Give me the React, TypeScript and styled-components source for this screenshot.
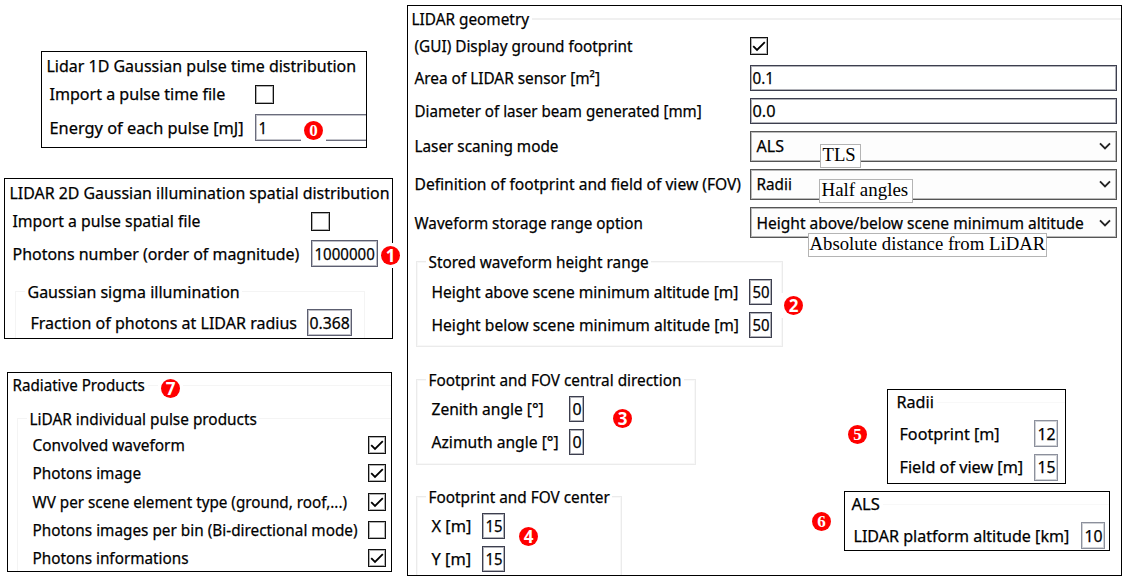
import React, { useLayoutEffect, useRef, useState } from "react";
import styled, { createGlobalStyle } from "styled-components";

const GlobalStyle = createGlobalStyle`
  *, *::before, *::after { box-sizing: border-box; }
  body { margin: 0; background: #fff; overflow: hidden; }
`;

const Page = styled.main`
  position: relative;
  display: grid;
  grid-template-columns: 407px 715px;
  width: 1125px;
  height: 578px;
  overflow: hidden;
  background: #fff;
  color: #000;
  font-family: "Noto Sans", "Open Sans", sans-serif;
  font-size: 16.5px;
  line-height: 22px;
`;

const LeftColumn = styled.div`
  display: flex;
  flex-direction: column;
  align-items: flex-start;
`;

const Panel = styled.section<{ $w: number; $h: number; $left?: number; $top?: number }>`
  display: flex;
  flex-direction: column;
  flex: none;
  width: ${(p) => p.$w}px;
  height: ${(p) => p.$h}px;
  margin-left: ${(p) => p.$left ?? 0}px;
  margin-top: ${(p) => p.$top ?? 0}px;
  border: 1px solid #000;
  overflow: hidden;
`;

const Legend = styled.div<{ $x: number; $top: number; $line?: string }>`
  display: flex;
  align-items: center;
  flex: none;
  height: 22px;
  margin-top: ${(p) => p.$top}px;
  padding-left: ${(p) => p.$x}px;
  &::after {
    content: "";
    flex: 1;
    height: ${(p) => (p.$line === "#f0f0f0" ? 2 : 1)}px;
    margin-left: 3px;
    background: ${(p) => p.$line ?? "transparent"};
  }
`;

const Row = styled.div<{ $h: number; $x: number; $top?: number }>`
  display: flex;
  align-items: center;
  flex: none;
  height: ${(p) => p.$h}px;
  margin-top: ${(p) => p.$top ?? 0}px;
  padding-left: ${(p) => p.$x}px;
`;

const LabelCell = styled.div<{ $w: number }>`
  flex: none;
  width: ${(p) => p.$w}px;
`;

const Group = styled.div<{ $w: number; $h: number; $top: number; $left: number; $faint?: boolean; $open?: boolean }>`
  flex: none;
  width: ${(p) => p.$w}px;
  height: ${(p) => p.$h}px;
  margin-top: ${(p) => p.$top}px;
  margin-left: ${(p) => p.$left}px;
  border: 1px solid ${(p) => (p.$faint ? "#f4f4f4" : "#ebebeb")};
  box-shadow: ${(p) => (p.$faint ? "none" : "inset 0 0 0 1px #f8f8f8")};
  ${(p) => p.$open && "border-bottom: 0;"}
`;

const GroupTitle = styled.div`
  width: fit-content;
  height: 22px;
  margin-top: -11px;
  margin-left: 9px;
  padding: 0 2px;
  background: #fff;
`;

const Field = styled.div<{ $w: number; $h?: number; $tone?: string; $pad?: number }>`
  display: flex;
  align-items: center;
  flex: none;
  width: ${(p) => p.$w}px;
  height: ${(p) => p.$h ?? 27}px;
  padding-left: ${(p) => p.$pad ?? 2}px;
  border: 1px solid ${(p) => p.$tone ?? "#3c3e4e"};
  box-shadow: inset 0 0 0 1px ${(p) => p.$tone ?? "#3c3e4e"}66;
  background: #fff;
`;

const Select = styled(Field)`
  height: 31px;
  padding-left: 5px;
  padding-right: 5px;
  justify-content: space-between;
  background: #fdfdfd;
`;

const Box = styled.div<{ $size: number }>`
  flex: none;
  width: ${(p) => p.$size}px;
  height: ${(p) => p.$size}px;
  border: 1px solid #111;
  box-shadow: inset 0 0 0 1px #5557;
  svg { display: block; width: 100%; height: 100%; }
`;

const Lower = styled.div`
  display: flex;
`;

const GroupColumn = styled.div`
  width: 436px;
  flex: none;
`;

const SideColumn = styled.div`
  display: flex;
  flex-direction: column;
`;

const Badge = styled.div<{ $cx: number; $cy: number; $serif?: boolean }>`
  position: absolute;
  left: ${(p) => p.$cx - 12.5}px;
  top: ${(p) => p.$cy - 12.5}px;
  display: grid;
  place-items: center;
  width: 25px;
  height: 25px;
  background: #fff;
  span {
    width: 19px;
    height: 19px;
    border-radius: 50%;
    background: #f00;
    color: #fff;
    text-align: center;
    font: bold 17px/19px ${(p) => (p.$serif ? '"Liberation Serif", serif' : '"Noto Sans", sans-serif')};
  }
`;

const Note = styled.div<{ $x: number; $y: number; $w: number; $pad: number }>`
  position: absolute;
  left: ${(p) => p.$x}px;
  top: ${(p) => p.$y}px;
  width: ${(p) => p.$w}px;
  height: 24px;
  padding-left: ${(p) => p.$pad}px;
  border: 1px solid #b4b4b4;
  background: #fff;
  font-family: "Liberation Serif", serif;
  font-size: 18px;
  line-height: 21px;
  span { -webkit-text-stroke-width: 0; }
`;

const Outer = styled.span<{ $w: number }>`
  display: block;
  flex: none;
  width: ${(p) => p.$w}px;
  white-space: nowrap;
`;

const Inner = styled.span`
  display: inline-block;
  transform-origin: 0 50%;
  -webkit-text-stroke: 0.25px currentColor;
`;

/* Condenses a caption horizontally so that it fills the given width. */
function Txt({ w, children }: { w: number; children: React.ReactNode }) {
  const ref = useRef<HTMLSpanElement>(null);
  const [scale, setScale] = useState(1);
  useLayoutEffect(() => {
    if (ref.current) setScale((w - 0.8) / ref.current.offsetWidth);
  }, [w]);
  return (
    <Outer $w={w}>
      <Inner ref={ref} style={{ transform: `translateX(0.5px) scaleX(${scale})` }}>{children}</Inner>
    </Outer>
  );
}

function Check({ on, size = 18 }: { on?: boolean; size?: number }) {
  return (
    <Box $size={size}>
      {on && (
        <svg viewBox="0 0 16 16" fill="none" stroke="#000" strokeWidth="1.8">
          <path d="M2.2 8.2 6 12 13.8 4.2" />
        </svg>
      )}
    </Box>
  );
}

const Chevron = () => (
  <svg width="12" height="8" viewBox="0 0 12 8" fill="none" stroke="#222" strokeWidth="1.9">
    <path d="M1 1.3 6 6.3 11 1.3" />
  </svg>
);

const products: [string, number, boolean][] = [
  ["Convolved waveform", 153, true],
  ["Photons image", 109.5, true],
  ["WV per scene element type (ground, roof,...)", 315, true],
  ["Photons images per bin (Bi-directional mode)", 326, false],
  ["Photons informations", 156.5, true],
];

const modes: [string, number, string, number][] = [
  ["Laser scaning mode", 144.5, "ALS", 28],
  ["Definition of footprint and field of view (FOV)", 327, "Radii", 36],
  ["Waveform storage range option", 229.5, "Height above/below scene minimum altitude", 328.5],
];

const LIGHT = "#8c909c";

export default function App() {
  return (
    <Page>
      <GlobalStyle />
      <LeftColumn>
        <Panel $w={326} $h={97} $left={41} $top={51}>
          <Legend $x={4} $top={3}><Txt w={310.5}>Lidar 1D Gaussian pulse time distribution</Txt></Legend>
          <Row $h={20} $x={7} $top={7}>
            <LabelCell $w={206}><Txt w={177}>Import a pulse time file</Txt></LabelCell>
            <Check size={19} />
          </Row>
          <Row $h={27} $x={7} $top={10}>
            <LabelCell $w={206}><Txt w={195}>Energy of each pulse [mJ]</Txt></LabelCell>
            <Field $w={116} $tone="#6a6c7c"><Txt w={9}>1</Txt></Field>
          </Row>
        </Panel>

        <Panel $w={389} $h={161} $left={4} $top={30}>
          <Legend $x={3.5} $top={3}><Txt w={380.5}>LIDAR 2D Gaussian illumination spatial distribution</Txt></Legend>
          <Row $h={20} $x={6.5} $top={7}>
            <LabelCell $w={299.5}><Txt w={189}>Import a pulse spatial file</Txt></LabelCell>
            <Check size={19} />
          </Row>
          <Row $h={27} $x={6.5} $top={9}>
            <LabelCell $w={299.5}><Txt w={288}>Photons number (order of magnitude)</Txt></LabelCell>
            <Field $w={67} $tone="#5c5e70"><Txt w={61}>1000000</Txt></Field>
          </Row>
          <Group $w={350} $h={60} $top={24} $left={10} $faint>
            <GroupTitle><Txt w={213}>Gaussian sigma illumination</Txt></GroupTitle>
            <Row $h={27} $x={14} $top={6}>
              <LabelCell $w={277}><Txt w={267}>Fraction of photons at LIDAR radius</Txt></LabelCell>
              <Field $w={45} $tone="#5c5e70" $pad={1}><Txt w={41}>0.368</Txt></Field>
            </Row>
          </Group>
        </Panel>

        <Panel $w={385} $h={200} $left={7} $top={33}>
          <Legend $x={4} $top={1} $line="#f5f5f5"><Txt w={133}>Radiative Products</Txt></Legend>
          <Group $w={390} $h={170} $top={21.5} $left={9} $faint>
            <GroupTitle><Txt w={228}>LiDAR individual pulse products</Txt></GroupTitle>
            {products.map(([name, w, on], i) => (
              <Row key={name} $h={28.3} $x={13.5} $top={i ? 0 : 1.5}>
                <LabelCell $w={336.5}><Txt w={w}>{name}</Txt></LabelCell>
                <Check on={on} />
              </Row>
            ))}
          </Group>
        </Panel>
      </LeftColumn>

      <Panel $w={715} $h={571} $top={5}>
        <Legend $x={3} $top={2} $line="#f0f0f0"><Txt w={118}>LIDAR geometry</Txt></Legend>
        <Row $h={18} $x={5.5} $top={7}>
          <LabelCell $w={336.5}><Txt w={219}>(GUI) Display ground footprint</Txt></LabelCell>
          <Check on />
        </Row>
        <Row $h={26} $x={5.5} $top={10}>
          <LabelCell $w={336.5}><Txt w={186}>Area of LIDAR sensor [m²]</Txt></LabelCell>
          <Field $w={367} $h={26} $pad={1}><Txt w={22}>0.1</Txt></Field>
        </Row>
        <Row $h={26} $x={5.5} $top={6.5}>
          <LabelCell $w={336.5}><Txt w={288}>Diameter of laser beam generated [mm]</Txt></LabelCell>
          <Field $w={367} $h={26} $pad={1}><Txt w={23.5}>0.0</Txt></Field>
        </Row>
        {modes.map(([name, w, value, vw]) => (
          <Row key={name} $h={31} $x={5.5} $top={7.2}>
            <LabelCell $w={336.5}><Txt w={w}>{name}</Txt></LabelCell>
            <Select $w={367} $tone="#555555"><Txt w={vw}>{value}</Txt><Chevron /></Select>
          </Row>
        ))}
        <Lower>
          <GroupColumn>
            <Group $w={367} $h={86} $top={22.5} $left={8}>
              <GroupTitle><Txt w={221}>Stored waveform height range</Txt></GroupTitle>
              <Row $h={26} $x={14} $top={6}>
                <LabelCell $w={318}><Txt w={308}>Height above scene minimum altitude [m]</Txt></LabelCell>
                <Field $w={23} $h={26}><Txt w={18}>50</Txt></Field>
              </Row>
              <Row $h={26} $x={14} $top={7}>
                <LabelCell $w={318}><Txt w={308}>Height below scene minimum altitude [m]</Txt></LabelCell>
                <Field $w={23} $h={26}><Txt w={18}>50</Txt></Field>
              </Row>
            </Group>
            <Group $w={280} $h={86} $top={32} $left={8}>
              <GroupTitle><Txt w={254}>Footprint and FOV central direction</Txt></GroupTitle>
              <Row $h={26} $x={14} $top={5}>
                <LabelCell $w={138}><Txt w={113}>Zenith angle [°]</Txt></LabelCell>
                <Field $w={15} $h={26}><Txt w={9.5}>0</Txt></Field>
              </Row>
              <Row $h={26} $x={14} $top={7}>
                <LabelCell $w={138}><Txt w={128}>Azimuth angle [°]</Txt></LabelCell>
                <Field $w={15} $h={26}><Txt w={9.5}>0</Txt></Field>
              </Row>
            </Group>
            <Group $w={206} $h={80} $top={31} $left={8} $open>
              <GroupTitle><Txt w={182}>Footprint and FOV center</Txt></GroupTitle>
              <Row $h={26} $x={14} $top={5}>
                <LabelCell $w={51}><Txt w={40.5}>X [m]</Txt></LabelCell>
                <Field $w={23} $h={26}><Txt w={18}>15</Txt></Field>
              </Row>
              <Row $h={26} $x={14} $top={7}>
                <LabelCell $w={51}><Txt w={40.5}>Y [m]</Txt></LabelCell>
                <Field $w={23} $h={26}><Txt w={18}>15</Txt></Field>
              </Row>
            </Group>
          </GroupColumn>
          <SideColumn>
            <Panel $w={179} $h={95} $left={43} $top={151}>
              <Legend $x={7.5} $top={1} $line="#f8f8f8"><Txt w={38}>Radii</Txt></Legend>
              <Row $h={27} $x={11} $top={7}>
                <LabelCell $w={135}><Txt w={100.5}>Footprint [m]</Txt></LabelCell>
                <Field $w={24} $tone={LIGHT}><Txt w={19}>12</Txt></Field>
              </Row>
              <Row $h={27} $x={11} $top={6.5}>
                <LabelCell $w={135}><Txt w={124.5}>Field of view [m]</Txt></LabelCell>
                <Field $w={24} $tone={LIGHT}><Txt w={19}>15</Txt></Field>
              </Row>
            </Panel>
            <Panel $w={266} $h={60} $top={7}>
              <Legend $x={6} $top={1} $line="#f8f8f8"><Txt w={29}>ALS</Txt></Legend>
              <Row $h={27} $x={8} $top={7}>
                <LabelCell $w={228}><Txt w={217}>LIDAR platform altitude [km]</Txt></LabelCell>
                <Field $w={24} $tone={LIGHT}><Txt w={19}>10</Txt></Field>
              </Row>
            </Panel>
          </SideColumn>
        </Lower>
      </Panel>

      <Note $x={820} $y={144} $w={41} $pad={1}><Txt w={34}>TLS</Txt></Note>
      <Note $x={819} $y={179} $w={94} $pad={0.5}><Txt w={87}>Half angles</Txt></Note>
      <Note $x={808} $y={233} $w={239} $pad={0}><Txt w={236}>Absolute distance from LiDAR</Txt></Note>

      <Badge $cx={313.5} $cy={130.5} $serif><span>0</span></Badge>
      <Badge $cx={390.5} $cy={255.5}><span>1</span></Badge>
      <Badge $cx={793.5} $cy={305.5}><span>2</span></Badge>
      <Badge $cx={622.5} $cy={418.5}><span>3</span></Badge>
      <Badge $cx={528.5} $cy={536.5}><span>4</span></Badge>
      <Badge $cx={857.5} $cy={434.5} $serif><span>5</span></Badge>
      <Badge $cx={821.5} $cy={521.5} $serif><span>6</span></Badge>
      <Badge $cx={170.5} $cy={388.5}><span>7</span></Badge>
    </Page>
  );
}
